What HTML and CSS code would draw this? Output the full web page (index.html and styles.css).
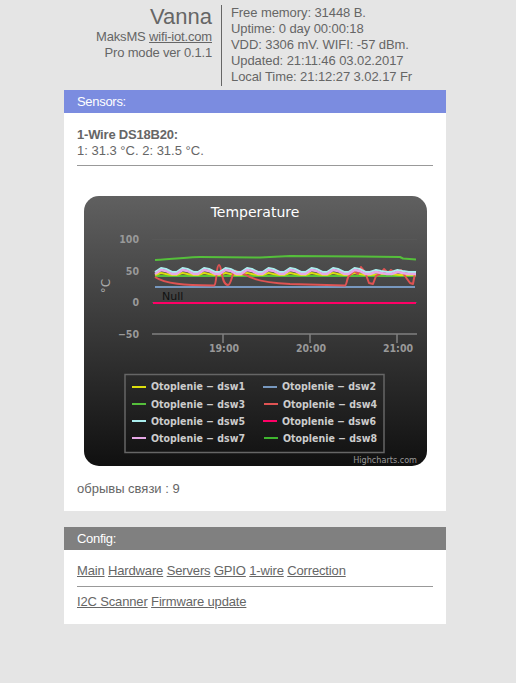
FILE: index.html
```html
<!DOCTYPE html>
<html lang="en">
<head>
    <meta charset="UTF-8">
    <meta name="viewport" content="width=device-width, initial-scale=1.0">
    <title>Vanna</title>
    <link rel="stylesheet" href="styles.css">
</head>
<body>
    <div class="page">
        <header class="top">
            <div class="top-left">
                <h1>Vanna</h1>
                <div>MaksMS <a href="#">wifi-iot.com</a></div>
                <div>Pro mode ver 0.1.1</div>
            </div>
            <div class="top-right">
                <div>Free memory: 31448 B.</div>
                <div>Uptime: 0 day 00:00:18</div>
                <div>VDD: 3306 mV. WIFI: -57 dBm.</div>
                <div>Updated: 21:11:46 03.02.2017</div>
                <div>Local Time: 21:12:27 3.02.17 Fr</div>
            </div>
        </header>

        <section class="panel">
            <h2 class="panel-title blue">Sensors:</h2>
            <div class="panel-body sensors">
                <div><b>1-Wire DS18B20:</b></div>
                <div>1: 31.3 °C. 2: 31.5 °C.</div>
                <hr>
                <svg class="chart" viewBox="84 196 343 270" width="343" height="270">
                    <defs>
                        <linearGradient id="chartBg" x1="0" y1="0" x2="0" y2="1">
                            <stop offset="0" stop-color="#606060"/>
                            <stop offset="1" stop-color="#101010"/>
                        </linearGradient>
                    </defs>
                    <rect x="84" y="196" width="343" height="270" rx="15" fill="url(#chartBg)"/>
                    <text class="chart-title" x="255" y="217">Temperature</text>

                    <!-- grid -->
                    <path class="grid" d="M152 239.500H417M152 271H417M152 302.500H417"/>
                    <path class="axis" d="M152 334H417M223 334v9M310 334v9M397 334v9"/>
                    <text class="y-label" x="139" y="243">100</text>
                    <text class="y-label" x="139" y="275">50</text>
                    <text class="y-label" x="139" y="306">0</text>
                    <text class="y-label" x="139" y="338">−50</text>
                    <text class="x-label" x="224" y="352">19:00</text>
                    <text class="x-label" x="311" y="352">20:00</text>
                    <text class="x-label" x="398" y="352">21:00</text>
                    <text class="y-title" transform="translate(110 286) rotate(-90)">°C</text>

                    <!-- series -->
                    <path class="line" stroke="#55bf3b" d="M155 260C175 259 190 257 200 257L260 257.500L290 256L360 256.500L400 257L403 258.500L416 259.500"/>
                    <path class="line" stroke="#7798bf" d="M155 287H415"/>
                    <path class="line" stroke="#55bf3b" d="M155 276H416"/>
                    <path class="line" stroke="#dddf0d" d="M155 275l6-2 5 1 6 1 4.500 0l6-2 5 1 6 1 4.500 0l6-2 5 1 6 1 4.500 0l6-2 5 1 6 1 4.500 0l6-2 5 1 6 1 4.500 0l6-2 5 1 6 1 4.500 0l6-2 5 1 6 1 4.500 0l6-2 5 1 6 1 4.500 0l6-2 5 1 6 1 4.500 0l6-2 5 1 6 1 4.500 0l10-1 10 0 10 1 16 0"/>
                    <path class="line" stroke="#df5353" d="M155 277C165 284 185 285 214 285.500C217 285 216 265 219 265C222 265 221 285 228 285C232 285 232 269 236 271C240 273 243 274 246 275C255 281 270 283 290 284L345 285.500C347 285 347 277 349 276L354 271L358 274L361 267L365 272L369 283L373 284L376 276L380 274L384 269L388 273L391 270L396 273L401 270L405 276L410 283L413 284L415 273"/>
                    <path class="line" stroke="#aaeeee" d="M155 272l6-4 5 1 6 3 4.500 0l6-4 5 1 6 3 4.500 0l6-4 5 1 6 3 4.500 0l6-4 5 1 6 3 4.500 0l6-4 5 1 6 3 4.500 0l6-4 5 1 6 3 4.500 0l6-4 5 1 6 3 4.500 0l6-4 5 1 6 3 4.500 0l6-4 5 1 6 3 4.500 0l6-4 5 1 6 3 4.500 0l6-2 5 1 6 1 4.500 0l6-2 5 1 6 1 4.500 0l3 0"/>
                    <path class="line wide" stroke="#e6a8e6" d="M155 274l6-4 5 1 6 3 4.500 0l6-4 5 1 6 3 4.500 0l6-4 5 1 6 3 4.500 0l6-4 5 1 6 3 4.500 0l6-4 5 1 6 3 4.500 0l6-4 5 1 6 3 4.500 0l6-4 5 1 6 3 4.500 0l6-4 5 1 6 3 4.500 0l6-4 5 1 6 3 4.500 0l6-4 5 1 6 3 4.500 0l6-2 5 1 6 1 4.500 0l6-2 5 1 6 1 4.500 0l3 0"/>
                    <path class="line" stroke="#ff0066" d="M153 303H416"/>
                    <text class="null-label" x="162" y="300">Null</text>

                    <!-- legend -->
                    <rect class="legend-box" x="125" y="374.500" width="259" height="78"/>
                    <path class="line" stroke="#dddf0d" d="M132 387h14"/>
                    <text class="legend" x="151" y="390">Otoplenie − dsw1</text>
                    <path class="line" stroke="#7798bf" d="M263 387h14"/>
                    <text class="legend" x="282" y="390">Otoplenie − dsw2</text>
                    <path class="line" stroke="#55bf3b" d="M132 404h14"/>
                    <text class="legend" x="151" y="408">Otoplenie − dsw3</text>
                    <path class="line" stroke="#df5353" d="M264 404h14"/>
                    <text class="legend" x="283" y="408">Otoplenie − dsw4</text>
                    <path class="line" stroke="#aaeeee" d="M132 421h14"/>
                    <text class="legend" x="151" y="425">Otoplenie − dsw5</text>
                    <path class="line" stroke="#ff0066" d="M263 421h14"/>
                    <text class="legend" x="282" y="425">Otoplenie − dsw6</text>
                    <path class="line" stroke="#e6a8e6" d="M132 438h14"/>
                    <text class="legend" x="151" y="442">Otoplenie − dsw7</text>
                    <path class="line" stroke="#3fb52f" d="M264 438h14"/>
                    <text class="legend" x="283" y="442">Otoplenie − dsw8</text>
                    <text class="credit" x="417" y="463">Highcharts.com</text>
                </svg>
                <div class="breaks">обрывы связи : 9</div>
            </div>
        </section>

        <section class="panel">
            <h2 class="panel-title gray">Config:</h2>
            <div class="panel-body config">
                <div>
                    <a href="#">Main</a>
                    <a href="#">Hardware</a>
                    <a href="#">Servers</a>
                    <a href="#">GPIO</a>
                    <a href="#">1-wire</a>
                    <a href="#">Correction</a>
                </div>
                <hr class="config-rule">
                <div>
                    <a href="#">I2C Scanner</a>
                    <a href="#">Firmware update</a>
                </div>
            </div>
        </section>
    </div>
</body>
</html>
```

FILE: styles.css
```css
body {
    background-color: #e5e5e5;
    color: #666666;
    font-family: "Liberation Sans", Arial, sans-serif;
    font-size: 13px;
    line-height: 16px;
    margin: 0;
}
a {
    color: #666666;
}
.page {
    width: 382px;
    margin-left: 64px;
}
.top {
    display: flex;
    padding-top: 5px;
    height: 81px;
    margin-bottom: 4px;
}
.top-left {
    width: 148px;
    padding-right: 9px;
    text-align: right;
    letter-spacing: -0.17px;
}
.top-left h1 {
    font-size: 22px;
    font-weight: normal;
    letter-spacing: 0;
    line-height: 24px;
    margin: 0;
}
.top-right {
    border-left: 1px solid #666666;
    padding-left: 9px;
    letter-spacing: -0.08px;
}
.panel {
    background-color: #ffffff;
    margin-bottom: 16px;
}
.panel-title {
    color: #ffffff;
    font-size: 13px;
    font-weight: normal;
    letter-spacing: -0.3px;
    line-height: 23px;
    margin: 0;
    padding-left: 13px;
}
.blue {
    background-color: #7b8ce0;
}
.gray {
    background-color: #808080;
}
.panel-body {
    padding: 0 13px;
}
.sensors {
    padding-top: 14px;
    padding-bottom: 14px;
    height: 370px;
}
.sensors b {
    letter-spacing: -0.2px;
}
.config {
    padding-top: 13px;
    padding-bottom: 14px;
    letter-spacing: -0.15px;
}
hr {
    border: none;
    border-top: 1px solid #999999;
    margin: 6px 0 30px 0;
}
.config-rule {
    margin: 7px 0 7px 0;
}
.chart {
    display: block;
    margin-left: 7px;
}
.breaks {
    margin-top: 15px;
}
.line {
    fill: none;
    stroke-width: 2;
    stroke-linejoin: round;
}
.wide {
    stroke-width: 2.500;
}
.grid {
    fill: none;
    stroke: #575757;
    stroke-width: 1;
}
.axis {
    fill: none;
    stroke: #808080;
    stroke-width: 1.500;
}
.chart-title {
    fill: #ffffff;
    font-family: "DejaVu Sans", sans-serif;
    font-size: 14px;
    text-anchor: middle;
}
.y-label, .x-label {
    fill: #999999;
    font-family: "DejaVu Sans Condensed", "DejaVu Sans", sans-serif;
    font-size: 10.500px;
    font-weight: bold;
}
.y-label {
    text-anchor: end;
}
.x-label {
    text-anchor: middle;
}
.y-title {
    fill: #aaaaaa;
    font-family: "DejaVu Sans", sans-serif;
    font-size: 12px;
    text-anchor: middle;
}
.null-label {
    fill: #111111;
    font-family: "DejaVu Sans", sans-serif;
    font-size: 11px;
}
.legend-box {
    fill: none;
    stroke: #666666;
    stroke-width: 1.500;
}
.legend {
    fill: #cccccc;
    font-family: "DejaVu Sans Condensed", "DejaVu Sans", sans-serif;
    font-size: 10.500px;
    font-weight: bold;
}
.credit {
    fill: #999999;
    font-family: "DejaVu Sans Condensed", "DejaVu Sans", sans-serif;
    font-size: 9px;
    text-anchor: end;
}
```
